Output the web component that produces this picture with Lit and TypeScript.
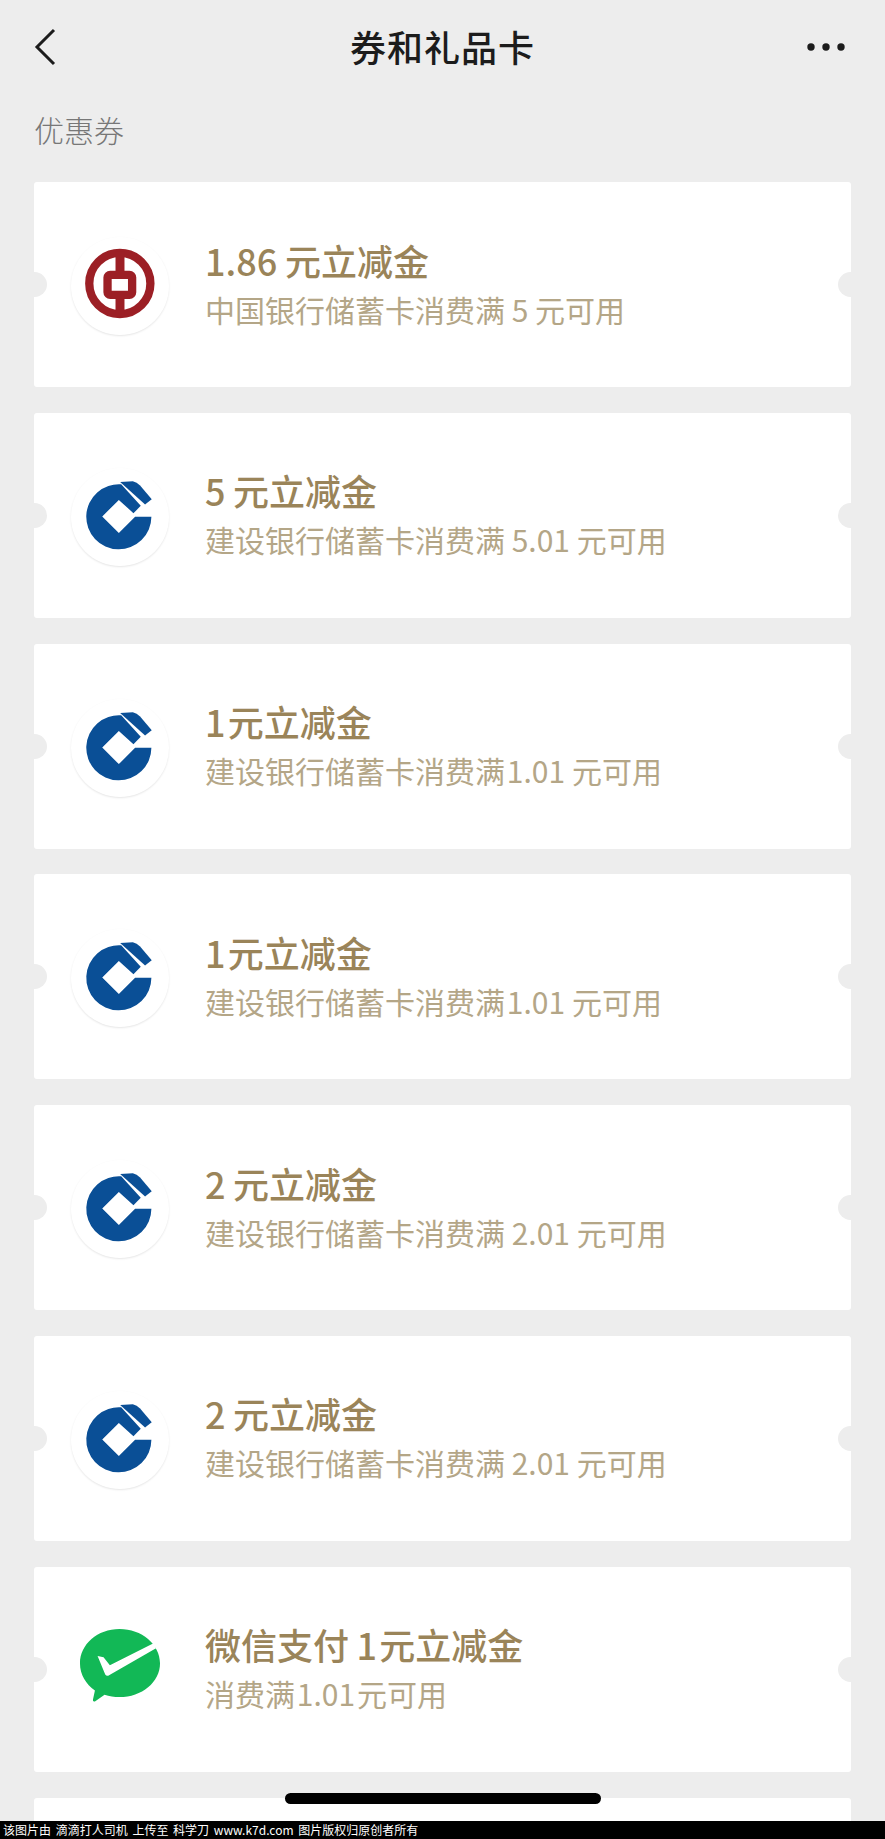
import { LitElement, css, html, svg } from "lit";
import { customElement } from "lit/decorators.js";

type Logo = "boc" | "ccb" | "wx";

// the "1" sits tighter than other digits, hence the hair spaces
const coupons: { logo: Logo; title: string; sub: string }[] = [
  { logo: "boc", title: "1.86 元立减金", sub: "中国银行储蓄卡消费满 5 元可用" },
  { logo: "ccb", title: "5 元立减金", sub: "建设银行储蓄卡消费满 5.01 元可用" },
  { logo: "ccb", title: "1\u200a元立减金", sub: "建设银行储蓄卡消费满\u200a1.01 元可用" },
  { logo: "ccb", title: "1\u200a元立减金", sub: "建设银行储蓄卡消费满\u200a1.01 元可用" },
  { logo: "ccb", title: "2 元立减金", sub: "建设银行储蓄卡消费满 2.01 元可用" },
  { logo: "ccb", title: "2 元立减金", sub: "建设银行储蓄卡消费满 2.01 元可用" },
  { logo: "wx", title: "微信支付 1\u200a元立减金", sub: "消费满\u200a1.01\u200a元可用" },
];

// coordinates below come from 3x crops of the reference, hence the odd viewBoxes
const logos = {
  boc: svg`<svg viewBox="152 201 295 295" width="98" height="98">
    <circle cx="299" cy="341" r="92" fill="none" stroke="#9c1f25" stroke-width="25" />
    <rect x="286" y="245" width="27" height="60" fill="#9c1f25" />
    <rect x="286" y="380" width="27" height="60" fill="#9c1f25" />
    <rect x="262" y="315" width="74" height="60" rx="8" fill="none" stroke="#9c1f25" stroke-width="25" />
  </svg>`,
  ccb: svg`<svg viewBox="152 201 295 295" width="98" height="98">
    <path fill="#0a4f96" d="M303 250 L362 315 L340 337 L296 297 L246 347 L296 397 L345 348 L394 348 A98 98 0 1 1 303 250 Z" />
    <path fill="#0a4f96" d="M300 243 L338 241 Q350 243 360 254 L395 295 L375 311 Z" />
  </svg>`,
  wx: svg`<svg viewBox="152 216 295 295" width="98" height="98">
    <path fill="#12b856" d="M298 237 C365 237 420 283 420 340 C420 397 365 442 298 442 C282 442 267 440 253 435 L224 455 Q217 457 218 450 L224 422 C197 403 179 374 179 340 C179 283 232 237 298 237 Z" />
    <path fill="#fff" d="M232 318 L250 322 L269 346 L402 279 L408 295 L264 378 Q258 379 255 374 Z" />
  </svg>`,
};

@customElement("app-root")
export class AppRoot extends LitElement {
  static styles = css`
    :host {
      display: block;
      position: relative;
      height: 1839px;
      overflow: hidden;
      background: #ededed;
      font-family: "Noto Sans CJK SC", "Noto Sans", sans-serif;
    }

    .nav {
      display: grid;
      grid-template-columns: 1fr auto 1fr;
      align-items: center;
      height: 92px;
      padding: 0 40px;
      margin-bottom: 2px;
      box-sizing: border-box;
    }

    .nav svg:first-child {
      margin-left: -6px;
      margin-top: 2px;
    }

    .nav svg:last-child {
      justify-self: end;
      margin-top: 2px;
    }

    .nav h1 {
      margin: 0;
      font-size: 36px;
      font-weight: 500;
      color: #1c1c1c;
      letter-spacing: 1px;
    }

    .section {
      height: 88px;
      padding: 15px 0 0 34px;
      box-sizing: border-box;
      font-size: 30px;
      line-height: 40px;
      font-weight: 300;
      color: #777;
    }

    .list {
      display: grid;
      gap: 25.8px;
      padding: 0 34px;
    }

    .card {
      position: relative;
      display: flex;
      align-items: center;
      gap: 36px;
      height: 205px;
      padding: 3px 0 0 37px;
      box-sizing: border-box;
      background: #fff;
      border-radius: 3px;
      overflow: hidden;
    }

    .card::before,
    .card::after {
      content: "";
      position: absolute;
      top: 90px;
      width: 25px;
      height: 25px;
      border-radius: 50%;
      background: #ededed;
    }

    .card::before {
      left: -12px;
    }

    .card::after {
      right: -12px;
    }

    .logo {
      display: flex;
      width: 98px;
      height: 98px;
      border-radius: 50%;
      box-shadow: 0 1px 2px rgba(0, 0, 0, 0.1);
    }

    .logo.wx {
      box-shadow: none;
    }

    .text {
      margin-bottom: 5px;
    }

    .title {
      font-size: 36px;
      line-height: 50px;
      font-weight: 500;
      color: #9a8459;
      white-space: pre;
      word-spacing: -0.5px;
    }

    .sub {
      font-size: 30px;
      line-height: 48px;
      font-weight: 400;
      color: #b4a687;
      white-space: pre;
    }

    .home {
      position: absolute;
      left: 285px;
      top: 1793px;
      width: 316px;
      height: 11px;
      border-radius: 6px;
      background: #000;
    }

    .watermark {
      position: absolute;
      left: 0;
      right: 0;
      bottom: 0;
      height: 18px;
      padding-left: 3px;
      background: #000;
      color: #fff;
      font-size: 12px;
      line-height: 18px;
      white-space: pre;
      word-spacing: 2px;
    }
  `;

  render() {
    return html`
      <div class="nav">
        <svg width="22" height="38" viewBox="0 0 22 38">
          <path d="M20 2 L3 19 L20 36" fill="none" stroke="#1c1c1c" stroke-width="3" />
        </svg>
        <h1>券和礼品卡</h1>
        <svg width="38" height="8" viewBox="0 0 38 8">
          <circle cx="4" cy="4" r="3.7" fill="#1c1c1c" />
          <circle cx="19" cy="4" r="3.7" fill="#1c1c1c" />
          <circle cx="34" cy="4" r="3.7" fill="#1c1c1c" />
        </svg>
      </div>
      <div class="section">优惠券</div>
      <div class="list">
        ${coupons.map(
          (c) => html`
            <div class="card">
              <div class="logo ${c.logo}">${logos[c.logo]}</div>
              <div class="text">
                <div class="title">${c.title}</div>
                <div class="sub">${c.sub}</div>
              </div>
            </div>
          `
        )}
        <div class="card"></div>
      </div>
      <div class="home"></div>
      <div class="watermark">该图片由 滴滴打人司机 上传至 科学刀 www.k7d.com 图片版权归原创者所有</div>
    `;
  }
}
